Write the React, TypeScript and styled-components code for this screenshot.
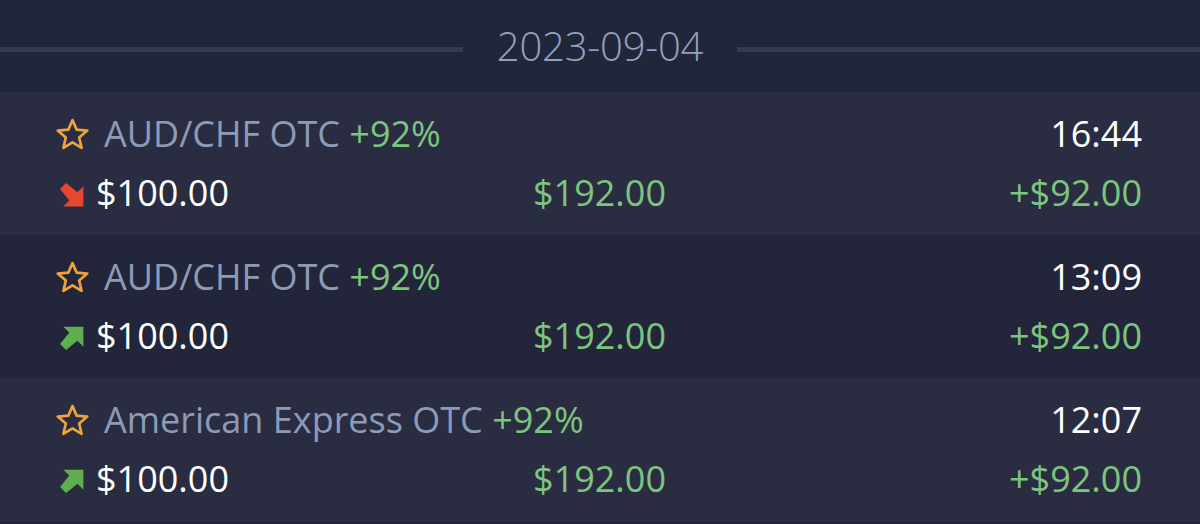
import React from "react";
import styled, { createGlobalStyle } from "styled-components";

const Global = createGlobalStyle`
  html, body { margin: 0; padding: 0; background: #22263a; }
  body { font-family: "Open Sans", "Noto Sans", sans-serif; -webkit-font-smoothing: antialiased; }
`;

const Page = styled.div`
  width: 1200px;
  height: 524px;
  overflow: hidden;
  background: #22263a;
`;

const DateHeader = styled.div`
  height: 92px;
  display: flex;
  align-items: center;
`;

const Rule = styled.div`
  flex: 1;
  height: 5px;
  margin-top: 6px;
  background: #363a50;
`;

const DateText = styled.div`
  padding: 0 34px;
  font-size: 40px;
  font-weight: 300;
  letter-spacing: -0.2px;
  color: #93a0be;
  line-height: 48px;
`;

const Row = styled.div<{ $alt?: boolean }>`
  height: 143px;
  box-sizing: border-box;
  padding: 18px 58px 0 56px;
  background: ${(p) => (p.$alt ? "#23263a" : "#2a2d42")};
  display: flex;
  flex-direction: column;
  gap: 11px;
`;

const Line = styled.div`
  display: grid;
  grid-template-columns: 477px 1fr auto;
  align-items: center;
  height: 48px;
  font-size: 36px;
  line-height: 48px;
`;

const TopLine = styled.div`
  display: flex;
  align-items: center;
  height: 48px;
  font-size: 36px;
  line-height: 48px;
`;

const Asset = styled.div`
  display: flex;
  align-items: center;
  gap: 15px;
  flex: 1;
`;

const Name = styled.span`
  color: #8d9ab8;
`;

const Green = styled.span`
  color: #7dc47c;
`;

const White = styled.span`
  color: #ffffff;
`;

const Amount = styled.div`
  display: flex;
  align-items: center;
  gap: 11px;
  color: #ffffff;
`;

const StarIcon = () => (
  <svg width="33" height="33" viewBox="0 0 32 32" style={{ flex: "none" }}>
    <polygon
      points="16,2 20,11.3 30.3,12.2 22.5,18.9 24.8,28.9 16,23.6 7.2,28.9 9.5,18.9 1.7,12.2 12,11.3"
      fill="none"
      stroke="#f0a33a"
      strokeWidth="2.6"
      strokeLinejoin="round"
    />
  </svg>
);

const Arrow = ({ up }: { up: boolean }) => (
  <svg
    width="26"
    height="26"
    viewBox="0 0 24 24"
    style={{ flex: "none", transform: up ? "none" : "scaleY(-1)", marginLeft: 3, marginTop: 3 }}
  >
    <path
      fill={up ? "#5fae50" : "#e8472e"}
      d="M4 1.5 H22.5 V20 L17 14.5 L6.5 23 L1 17.5 L9.5 7 Z"
    />
  </svg>
);

type Trade = { name: string; time: string; up: boolean };

const trades: Trade[] = [
  { name: "AUD/CHF OTC", time: "16:44", up: false },
  { name: "AUD/CHF OTC", time: "13:09", up: true },
  { name: "American Express OTC", time: "12:07", up: true },
];

export default function App() {
  return (
    <Page>
      <Global />
      <DateHeader>
        <Rule />
        <DateText>2023-09-04</DateText>
        <Rule />
      </DateHeader>
      {trades.map((t, i) => (
        <Row key={i} $alt={i % 2 === 1}>
          <TopLine>
            <Asset>
              <StarIcon />
              <span>
                <Name>{t.name}</Name> <Green>+92%</Green>
              </span>
            </Asset>
            <White>{t.time}</White>
          </TopLine>
          <Line>
            <Amount>
              <Arrow up={t.up} />
              <span>$100.00</span>
            </Amount>
            <Green>$192.00</Green>
            <Green>+$92.00</Green>
          </Line>
        </Row>
      ))}
    </Page>
  );
}
